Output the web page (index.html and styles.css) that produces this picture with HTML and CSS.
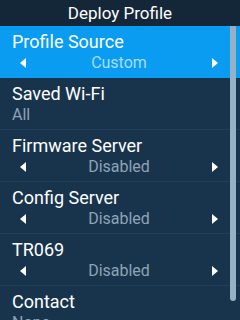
FILE: index.html
```html
<!DOCTYPE html>
<html lang="en">
<head>
  <meta charset="UTF-8">
  <title>Deploy Profile</title>
  <link rel="stylesheet" href="styles.css">
</head>
<body>
  <div class="screen">
    <div class="title">Deploy Profile</div>
    <div class="list">
      <div class="item selected">
        <div class="label">Profile Source</div>
        <div class="value picker">
          <span class="arrow left"></span>
          <span class="text">Custom</span>
          <span class="arrow right"></span>
        </div>
      </div>
      <div class="item">
        <div class="label">Saved Wi-Fi</div>
        <div class="value">All</div>
      </div>
      <div class="item">
        <div class="label">Firmware Server</div>
        <div class="value picker">
          <span class="arrow left"></span>
          <span class="text">Disabled</span>
          <span class="arrow right"></span>
        </div>
      </div>
      <div class="item">
        <div class="label">Config Server</div>
        <div class="value picker">
          <span class="arrow left"></span>
          <span class="text">Disabled</span>
          <span class="arrow right"></span>
        </div>
      </div>
      <div class="item">
        <div class="label">TR069</div>
        <div class="value picker">
          <span class="arrow left"></span>
          <span class="text">Disabled</span>
          <span class="arrow right"></span>
        </div>
      </div>
      <div class="item">
        <div class="label">Contact</div>
        <div class="value">None</div>
      </div>
      <div class="scrollbar"></div>
    </div>
  </div>
</body>
</html>
```

FILE: styles.css
```css
body {
  margin: 0;
  background-color: #18344c;
  font-family: Roboto, "Noto Sans", sans-serif;
}
.screen {
  width: 240px;
  height: 320px;
  overflow: hidden;
  display: flex;
  flex-direction: column;
}
.title {
  height: 26px;
  line-height: 26px;
  background-color: #142738;
  color: #fff;
  text-align: center;
  font-size: 17px;
  flex-shrink: 0;
}
.list {
  position: relative;
  flex: 1;
  overflow: hidden;
}
.item {
  height: 52px;
  padding: 5px 12px 0 12px;
  box-sizing: border-box;
  border-bottom: 1px solid #213f58;
}
.item.selected {
  background-color: #0a9cf0;
  border-bottom-color: #0a9cf0;
}
.label {
  color: #fff;
  font-size: 18px;
  line-height: 22px;
}
.value {
  color: #8ea3b6;
  font-size: 16px;
  line-height: 20px;
}
.picker {
  display: flex;
  align-items: center;
  justify-content: space-between;
  padding: 0 10px 0 8px;
}
.selected .value {
  color: #a9dcff;
}
.arrow {
  width: 0;
  height: 0;
  border-top: 5px solid transparent;
  border-bottom: 5px solid transparent;
}
.arrow.left {
  border-right: 6px solid #fff;
}
.arrow.right {
  border-left: 6px solid #fff;
}
.scrollbar {
  position: absolute;
  top: 0;
  right: 4px;
  width: 6px;
  height: 275px;
  border-radius: 0 0 3px 3px;
  background-color: #96b0c6;
}
```
